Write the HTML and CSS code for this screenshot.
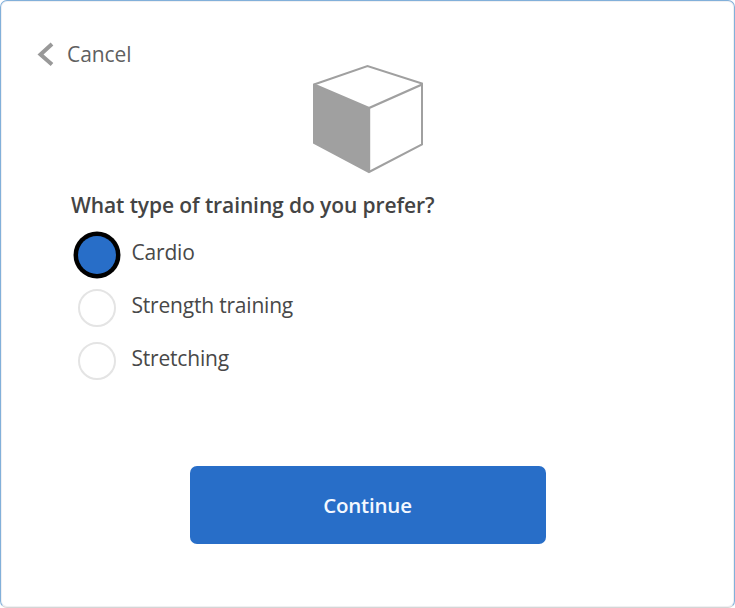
FILE: index.html
```html
<!DOCTYPE html>
<html lang="en">
<head>
<meta charset="utf-8">
<title>Training preference</title>
<link rel="stylesheet" href="styles.css">
</head>
<body>
<main class="card">
  <a class="cancel"><svg class="chevron" width="17" height="24" viewBox="0 0 17 24"><path d="M15 2 3.500 12.500 15 22.500" fill="none" stroke="#999" stroke-width="4"/></svg><span class="cancel-text">Cancel</span></a>
  <svg class="cube" width="112" height="110" viewBox="0 0 112 110"><path d="M2 20.500 55.500 2 110 19.500V80.500L57 108 2 79Z" fill="#fff" stroke="#a0a0a0" stroke-width="2"/><path d="M2 20.500 57 44V108L2 79Z" fill="#a0a0a0"/><path d="M2 20.500 57 44 110 20.500M57 43V108" fill="none" stroke="#a0a0a0" stroke-width="2.400"/></svg>
  <form class="form">
    <h1 class="question">What type of training do you prefer?</h1>
    <div class="options">
      <label class="option"><i class="radio selected"></i><span>Cardio</span></label>
      <label class="option"><i class="radio"></i><span>Strength training</span></label>
      <label class="option"><i class="radio"></i><span>Stretching</span></label>
    </div>
    <button class="continue" type="button">Continue</button>
  </form>
</main>
</body>
</html>
```
FILE: styles.css
```css
* { box-sizing: border-box; }
body { margin: 0; background: #fff; font-family: "Open Sans", "Noto Sans", sans-serif; color: #484848; }
.card { width: 735px; height: 608px; border: 1px solid #82b0da; border-bottom-color: #d5d5d5; border-radius: 7px; box-shadow: inset 0 0 0 1px #f0f0f2; display: flex; flex-direction: column; }
.cancel { display: flex; align-items: center; height: 24px; margin: 41px 0 0 36px; font-size: 21px; letter-spacing: -0.1px; color: #606060; }
.cancel-text { margin-left: 13px; }
.chevron, .cube { display: block; flex: none; }
.cube { margin: -2px 0 0 311px; }
.form { display: flex; flex-direction: column; }
.question { margin: 16px 0 0 70px; font-size: 21px; line-height: 30px; letter-spacing: -0.1px; font-weight: 600; white-space: nowrap; color: #444; }
.options { display: flex; flex-direction: column; margin: 8px 0 0 77px; }
.option { display: flex; align-items: center; height: 53px; font-size: 21px; letter-spacing: -0.2px; white-space: nowrap; }
.option span { margin: -6px 0 0 15.5px; }
.radio { width: 38px; height: 38px; border: 2px solid #e4e4e4; border-radius: 50%; flex: none; }
.selected { background: #286ec8; border: 0; box-shadow: 0 0 0 4.5px #000; }
.continue { width: 356px; height: 78px; margin: 79px 0 0 188.5px; padding: 0; border: 0; border-radius: 7px; background: #286ec8; color: #f4f8ff; font: 600 20.5px "Open Sans", sans-serif; letter-spacing: -0.2px; }
```
